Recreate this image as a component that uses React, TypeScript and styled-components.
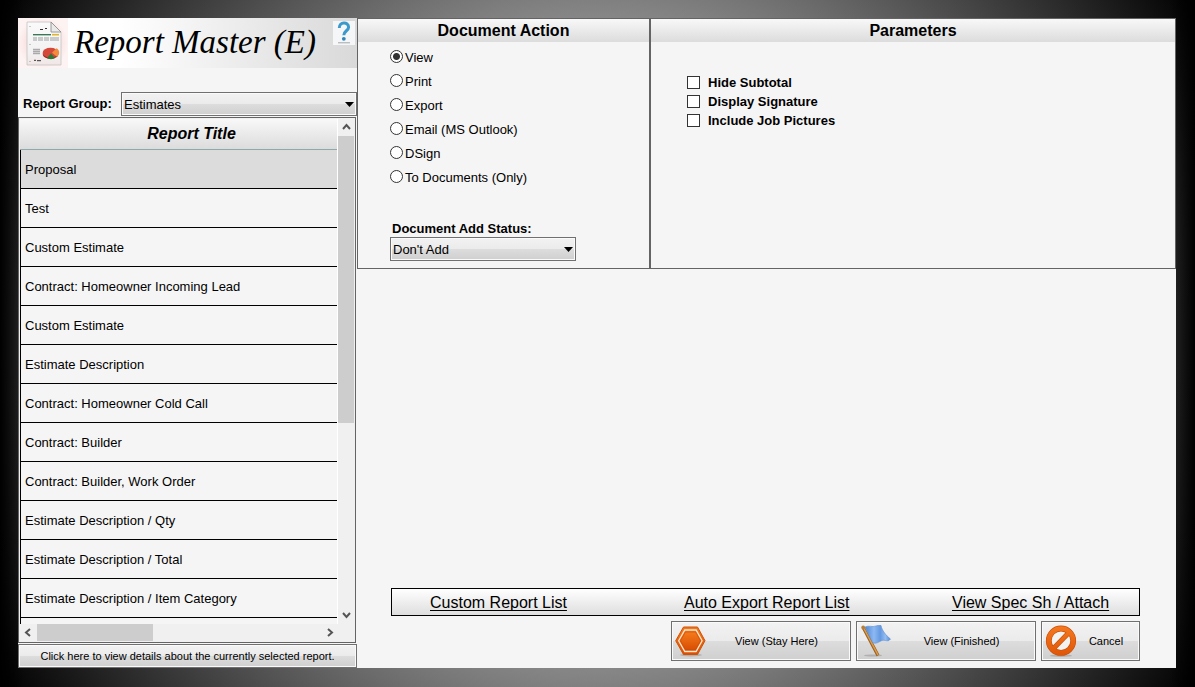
import React, { useState } from "react";
import styled, { createGlobalStyle } from "styled-components";

const GlobalStyle = createGlobalStyle`
  *, *::before, *::after { box-sizing: border-box; }
  body {
    margin: 0;
    font-family: "Liberation Sans", Arial, sans-serif;
    font-size: 13px;
    line-height: 16px;
    color: #000;
  }
`;

const Backdrop = styled.div`
  height: 100vh;
  min-height: 480px;
  padding: 18px 19px 19px 18px;
  background:
    linear-gradient(90deg, #000, transparent 24px, transparent calc(100% - 24px), #000),
    radial-gradient(circle farthest-corner at center, #fff, #000);
`;

const Window = styled.main`
  display: grid;
  grid-template-columns: 339px minmax(0, 1fr);
  height: 100%;
  background: #f5f5f5;
`;

const Sidebar = styled.section`
  display: flex;
  flex-direction: column;
  min-height: 0;
`;

const Banner = styled.header`
  display: flex;
  align-items: flex-start;
  height: 50px;
  background: linear-gradient(90deg, #fff 30%, #d9d9d9);
`;

const Title = styled.h1`
  flex: 1;
  margin: 0;
  padding-left: 6px;
  font: italic 33px/48px "Liberation Serif", "Times New Roman", serif;
  white-space: nowrap;
`;

const HelpButton = styled.button`
  width: 22px;
  height: 24px;
  margin: 3px 2px 0 0;
  padding: 0;
  border: 0;
  background: #f4f6f8;
`;

const GroupRow = styled.div`
  display: flex;
  align-items: center;
  justify-content: space-between;
  height: 24px;
  margin: 24px 0 1px;
  padding-left: 5px;
`;

const FieldLabel = styled.label`
  font-weight: bold;
`;

const SelectFrame = styled.span<{ $width: number }>`
  display: grid;
  align-items: center;
  width: ${(p) => p.$width}px;
  height: 24px;

  > * { grid-area: 1 / 1; }
  > svg {
    justify-self: end;
    margin-right: 3px;
    pointer-events: none;
  }
`;

const glossy = `
  border: 1px solid #707070;
  background: linear-gradient(#f2f2f2, #ebebeb 50%, #dddddd 50%, #cfcfcf);
  box-shadow: inset 0 0 0 1px #fafafa;
  color: #000;
`;

const Select = styled.select`
  ${glossy}
  appearance: none;
  width: 100%;
  height: 24px;
  padding: 2px 16px 0 2px;
  border-radius: 0;
  font: inherit;
`;

const ListBox = styled.div`
  display: grid;
  grid-template: minmax(0, 1fr) 17px / minmax(0, 1fr) 16px;
  flex: 1;
  min-height: 0;
  margin-right: 1px;
  padding: 1px;
  border: 1px solid #646464;
  background: #f0f0f0;
`;

const Viewport = styled.div`
  overflow: hidden;
  background: #f5f5f5;
  border-right: 1px solid #fff;
`;

const Table = styled.table`
  width: 100%;
  border-collapse: separate;
  border-spacing: 0;

  th {
    height: 31px;
    padding: 0 0 0 26px;
    border-bottom: 1px solid #8fa9a9;
    background: linear-gradient(#f8f8f8, #dcdcdc);
    font: italic bold 16px/20px "Liberation Sans", Arial, sans-serif;
  }
`;

const ReportRow = styled.tr<{ $selected: boolean }>`
  background: ${(p) => (p.$selected ? "#dcdcdc" : "#f5f5f5")};

  td {
    height: 39px;
    padding: 2px 4px 0;
    border-left: 1px solid #000;
    border-bottom: 1px solid #000;
  }
`;

const ScrollBar = styled.div<{ $vertical?: boolean }>`
  display: flex;
  flex-direction: ${(p) => (p.$vertical ? "column" : "row")};
  background: #f0f0f0;
`;

const ScrollTrack = styled.div<{ $vertical?: boolean }>`
  display: flex;
  flex-direction: ${(p) => (p.$vertical ? "column" : "row")};
  flex: 1;
  min-height: 0;
`;

const ScrollThumb = styled.div<{ $share: number }>`
  flex: 0 0 ${(p) => p.$share}%;
  background: #cdcdcd;
`;

const ScrollArrow = styled.button`
  display: grid;
  place-items: center;
  width: 17px;
  height: 17px;
  padding: 0;
  border: 0;
  background: transparent;
`;

const DetailsButton = styled.button`
  ${glossy}
  height: 24px;
  margin: 1px 0 0;
  padding: 0;
  font: 11px/16px "Liberation Sans", Arial, sans-serif;
`;

const Content = styled.div`
  display: flex;
  flex-direction: column;
  justify-content: space-between;
`;

const Panels = styled.div`
  display: grid;
  grid-template-columns: 292px minmax(0, 1fr);
  height: 251px;
  border: 1px solid #646464;
`;

const Panel = styled.section`
  display: flex;
  flex-direction: column;

  & + & { border-left: 1px solid #646464; }
  &:first-child { border-right: 1px solid #646464; }
`;

const PanelTitle = styled.h2`
  margin: 0;
  height: 23px;
  background: linear-gradient(#f8f8f8, #dcdcdc);
  font-size: 16px;
  line-height: 23px;
  text-align: center;
`;

const ActionBody = styled.div`
  display: flex;
  flex: 1;
  flex-direction: column;
  padding: 3px 32px 7px;
`;

const Options = styled.fieldset`
  margin: 0;
  padding: 0;
  border: 0;
`;

const RadioLabel = styled.label`
  display: flex;
  align-items: center;
  gap: 2px;
  height: 24px;
  line-height: 18px;
`;

const Radio = styled.input`
  appearance: none;
  width: 13px;
  height: 13px;
  margin: 0 0 2px;
  border: 1px solid #333;
  border-radius: 50%;
  background: #fff;

  &:checked {
    background: radial-gradient(circle, #333 3px, #fff 4px);
  }
`;

const RadioText = styled.span`
  padding-top: 2px;
`;

const StatusField = styled.div`
  display: flex;
  flex-direction: column;
  margin-top: auto;

  ${FieldLabel} { padding-left: 2px; }
`;

const ParameterBody = styled.div`
  padding: 31px 36px;
`;

const CheckLabel = styled.label`
  display: flex;
  align-items: center;
  gap: 8px;
  height: 19px;
  font-weight: bold;
`;

const Check = styled.input`
  appearance: none;
  width: 13px;
  height: 13px;
  margin: 0;
  border: 1px solid #333;
  background: #fff;

  &:checked { box-shadow: inset 0 0 0 2px #fff; background: #333; }
`;

const Footer = styled.footer`
  display: flex;
  flex-direction: column;
  gap: 5px;
  padding: 0 36px 7px 34px;
`;

const LinkBar = styled.nav`
  display: grid;
  grid-template-columns: 254fr 268fr 187fr;
  align-items: center;
  height: 28px;
  padding: 2px 0 0 38px;
  border: 1px solid #000;
  background: linear-gradient(#fff, #dedede);
`;

const BarLink = styled.a`
  color: #000;
  font-size: 16px;
  line-height: 20px;
  text-decoration: underline;
  text-underline-offset: 2px;
  text-decoration-skip-ink: none;
  white-space: nowrap;
`;

const Actions = styled.div`
  display: flex;
  justify-content: flex-end;
  gap: 5px;
`;

const ActionButton = styled.button<{ $compact?: boolean }>`
  ${glossy}
  display: flex;
  align-items: center;
  width: ${(p) => (p.$compact ? 99 : 180)}px;
  height: 40px;
  padding: 0 4px 0 3px;
  font: 11px/16px "Liberation Sans", Arial, sans-serif;

  span { flex: 1; text-align: center; }
`;

const Caret = () => (
  <svg width="9" height="5" viewBox="0 0 9 5" aria-hidden="true">
    <path d="M0 0h9L4.500 5z" fill="#000" />
  </svg>
);

const chevrons = {
  up: "M1 6l3.500-4 3.500 4",
  down: "M1 2l3.500 4 3.500-4",
  left: "M6 1l-4 3.500 4 3.500",
  right: "M3 1l4 3.500-4 3.500",
};

const Arrow = ({ to }: { to: keyof typeof chevrons }) => (
  <ScrollArrow type="button" aria-label={`Scroll ${to}`}>
    <svg width="9" height="9" viewBox="0 0 9 9" aria-hidden="true">
      <path d={chevrons[to]} fill="none" stroke="#555" strokeWidth="2" />
    </svg>
  </ScrollArrow>
);

const ReportIcon = () => (
  <svg width="50" height="50" viewBox="0 0 50 50" aria-hidden="true">
    <defs>
      <radialGradient id="glow">
        <stop offset="0.600" stopColor="#f9e0e0" />
        <stop offset="1" stopColor="#fdf3f2" />
      </radialGradient>
      <linearGradient id="sheet" x2="0" y2="1">
        <stop stopColor="#fafafa" />
        <stop offset="0.700" stopColor="#f3f2f2" />
        <stop offset="1" stopColor="#f1e6e6" />
      </linearGradient>
    </defs>
    <rect width="50" height="50" fill="url(#glow)" />
    <path d="M9 4h24l10 10v33H9z" fill="url(#sheet)" stroke="#c4c1c1" strokeWidth="0.800" />
    <path d="M33 4v10h10z" fill="#e9e9e9" stroke="#8f8f8f" strokeWidth="0.900" />
    <path d="M22 11.500h3m2-1h2" stroke="#333" strokeWidth="1" />
    <path d="M15 16.700h18" stroke="#2f704d" strokeWidth="1.300" />
    <path d="M34 16.700h7" stroke="#e0b42b" strokeWidth="1.600" />
    <path d="M15 20h26M15 22h26" stroke="#b9bdbb" strokeWidth="1.400" />
    <path d="M19.500 18v5m6-5v5m6-5v5" stroke="#fff" strokeWidth="0.800" />
    <path d="M15 31.500h7M15 33.500h7M15 35.500h7" stroke="#aaa" strokeWidth="1.300" />
    <path d="M16 42.300h2m1 .400h4" stroke="#333" strokeWidth="1" />
    <path d="M12 8v1m0 17v1m0 16v1" stroke="#999" strokeWidth="1" />
    <ellipse cx="33" cy="38" rx="7.500" ry="2" fill="#c6aaaa" opacity="0.600" />
    <ellipse cx="32.500" cy="36" rx="7.800" ry="5" fill="#9f2620" />
    <ellipse cx="32.500" cy="34.700" rx="7.800" ry="5" fill="#d5493b" />
    <path d="M34 34.700l4.500-4.500c3.500 2 3.500 6 .500 8.500z" fill="#f28b3c" />
    <path d="M33 35.500l4 4.500c-2 1.500-6 1.500-8 0z" fill="#2c7a34" />
  </svg>
);

const HelpIcon = () => (
  <svg width="22" height="24" viewBox="0 0 22 24" aria-hidden="true">
    <path d="M6.300 7C6 .600 15.600 .400 15.600 6.200c0 3.500-4.800 3.700-4.800 8" fill="none" stroke="#3c99cb" strokeWidth="3" />
    <circle cx="10.800" cy="17.800" r="1.900" fill="#2f86b8" />
    <path d="M5 21.800h12" stroke="#a3a7aa" strokeWidth="1" />
  </svg>
);

const HexagonIcon = () => (
  <svg width="32" height="32" viewBox="0 0 32 32" aria-hidden="true">
    <defs>
      <linearGradient id="orange" x2="0" y2="1">
        <stop stopColor="#f57b1c" />
        <stop offset="1" stopColor="#d94f04" />
      </linearGradient>
    </defs>
    <ellipse cx="16" cy="30" rx="11" ry="1.500" fill="#999" opacity="0.600" />
    <path d="M8.500 2h14L30 15.700 22.500 29.500h-14L0.700 15.700z" fill="url(#orange)" stroke="#cf5205" strokeWidth="1" strokeLinejoin="round" />
    <path d="M9.800 5h11.300l6 10.700-6 10.800H9.800L3.700 15.700z" fill="none" stroke="#ffe7d3" strokeWidth="1.300" />
    <path d="M10.500 7h10l5 8.700-5 8.800h-10l-5-8.800z" fill="url(#orange)" stroke="#c94c04" strokeWidth="0.600" />
  </svg>
);

const FlagIcon = () => (
  <svg width="32" height="32" viewBox="0 0 32 32" aria-hidden="true">
    <defs>
      <linearGradient id="cloth">
        <stop stopColor="#4e86d2" />
        <stop offset="0.350" stopColor="#8db9f2" />
        <stop offset="0.600" stopColor="#6499e0" />
        <stop offset="0.800" stopColor="#94bdf3" />
        <stop offset="1" stopColor="#5488d5" />
      </linearGradient>
    </defs>
    <ellipse cx="13" cy="30.500" rx="9" ry="1" fill="#999" opacity="0.600" />
    <path d="M3.500 3L18 30.500" stroke="#98601f" strokeWidth="3.200" />
    <path d="M3.700 3L18 30" stroke="#dc9b4a" strokeWidth="1.600" />
    <circle cx="3.200" cy="2.500" r="1.900" fill="#ba7d37" />
    <path d="M5 2C9 0 12 2.500 16 1c2-.800 3-1 5-.500 1 5 5 10 9.500 13.500-2.500 3.500-5.500 .500-8.500 1.500-3 1-5.500 4-9.500 2z" fill="url(#cloth)" stroke="#5b8cd0" strokeWidth="0.600" />
  </svg>
);

const ForbiddenIcon = () => (
  <svg width="32" height="32" viewBox="0 0 32 32" aria-hidden="true">
    <defs>
      <linearGradient id="ring" gradientUnits="userSpaceOnUse" x1="0" y1="0" x2="0" y2="31">
        <stop stopColor="#f57a22" />
        <stop offset="1" stopColor="#df5507" />
      </linearGradient>
    </defs>
    <ellipse cx="16" cy="30.700" rx="11" ry="1.200" fill="#999" opacity="0.600" />
    <circle cx="16" cy="15.700" r="12.200" fill="#f2f2f2" stroke="#c94e05" strokeWidth="5.800" />
    <path d="M8 24L24 7.500" stroke="#c94e05" strokeWidth="5" />
    <circle cx="16" cy="15.700" r="12.200" fill="none" stroke="url(#ring)" strokeWidth="4.600" />
    <path d="M7.500 24.500L24.500 7" stroke="url(#ring)" strokeWidth="3.800" />
  </svg>
);

const reports = [
  "Proposal",
  "Test",
  "Custom Estimate",
  "Contract: Homeowner Incoming Lead",
  "Custom Estimate",
  "Estimate Description",
  "Contract: Homeowner Cold Call",
  "Contract: Builder",
  "Contract: Builder, Work Order",
  "Estimate Description / Qty",
  "Estimate Description / Total",
  "Estimate Description / Item Category",
  "",
];

const documentActions = ["View", "Print", "Export", "Email (MS Outlook)", "DSign", "To Documents (Only)"];
const parameters = ["Hide Subtotal", "Display Signature", "Include Job Pictures"];
const links = ["Custom Report List", "Auto Export Report List", "View Spec Sh / Attach"];

export default function App() {
  const [selected, setSelected] = useState(0);

  return (
    <Backdrop>
      <GlobalStyle />
      <Window>
        <Sidebar>
          <Banner>
            <ReportIcon />
            <Title>Report Master (E)</Title>
            <HelpButton type="button" aria-label="Help">
              <HelpIcon />
            </HelpButton>
          </Banner>
          <GroupRow>
            <FieldLabel htmlFor="report-group">Report Group:</FieldLabel>
            <SelectFrame $width={236}>
              <Select id="report-group">
                <option>Estimates</option>
              </Select>
              <Caret />
            </SelectFrame>
          </GroupRow>
          <ListBox>
            <Viewport>
              <Table>
                <thead>
                  <tr>
                    <th scope="col">Report Title</th>
                  </tr>
                </thead>
                <tbody>
                  {reports.map((name, i) => (
                    <ReportRow key={i} $selected={i === selected} onClick={() => setSelected(i)}>
                      <td>{name}</td>
                    </ReportRow>
                  ))}
                </tbody>
              </Table>
            </Viewport>
            <ScrollBar $vertical>
              <Arrow to="up" />
              <ScrollTrack $vertical>
                <ScrollThumb $share={61} />
              </ScrollTrack>
              <Arrow to="down" />
            </ScrollBar>
            <ScrollBar>
              <Arrow to="left" />
              <ScrollTrack>
                <ScrollThumb $share={41} />
              </ScrollTrack>
              <Arrow to="right" />
            </ScrollBar>
          </ListBox>
          <DetailsButton type="button">Click here to view details about the currently selected report.</DetailsButton>
        </Sidebar>

        <Content>
          <Panels>
            <Panel>
              <PanelTitle>Document Action</PanelTitle>
              <ActionBody>
                <Options aria-label="Document Action">
                  {documentActions.map((name, i) => (
                    <RadioLabel key={name}>
                      <Radio type="radio" name="document-action" defaultChecked={i === 0} />
                      <RadioText>{name}</RadioText>
                    </RadioLabel>
                  ))}
                </Options>
                <StatusField>
                  <FieldLabel htmlFor="add-status">Document Add Status:</FieldLabel>
                  <SelectFrame $width={186}>
                    <Select id="add-status">
                      <option>Don't Add</option>
                    </Select>
                    <Caret />
                  </SelectFrame>
                </StatusField>
              </ActionBody>
            </Panel>
            <Panel>
              <PanelTitle>Parameters</PanelTitle>
              <ParameterBody>
                {parameters.map((name) => (
                  <CheckLabel key={name}>
                    <Check type="checkbox" />
                    {name}
                  </CheckLabel>
                ))}
              </ParameterBody>
            </Panel>
          </Panels>

          <Footer>
            <LinkBar>
              {links.map((name) => (
                <div key={name}>
                  <BarLink href="#">{name}</BarLink>
                </div>
              ))}
            </LinkBar>
            <Actions>
              <ActionButton type="button">
                <HexagonIcon />
                <span>View (Stay Here)</span>
              </ActionButton>
              <ActionButton type="button">
                <FlagIcon />
                <span>View (Finished)</span>
              </ActionButton>
              <ActionButton type="button" $compact>
                <ForbiddenIcon />
                <span>Cancel</span>
              </ActionButton>
            </Actions>
          </Footer>
        </Content>
      </Window>
    </Backdrop>
  );
}
